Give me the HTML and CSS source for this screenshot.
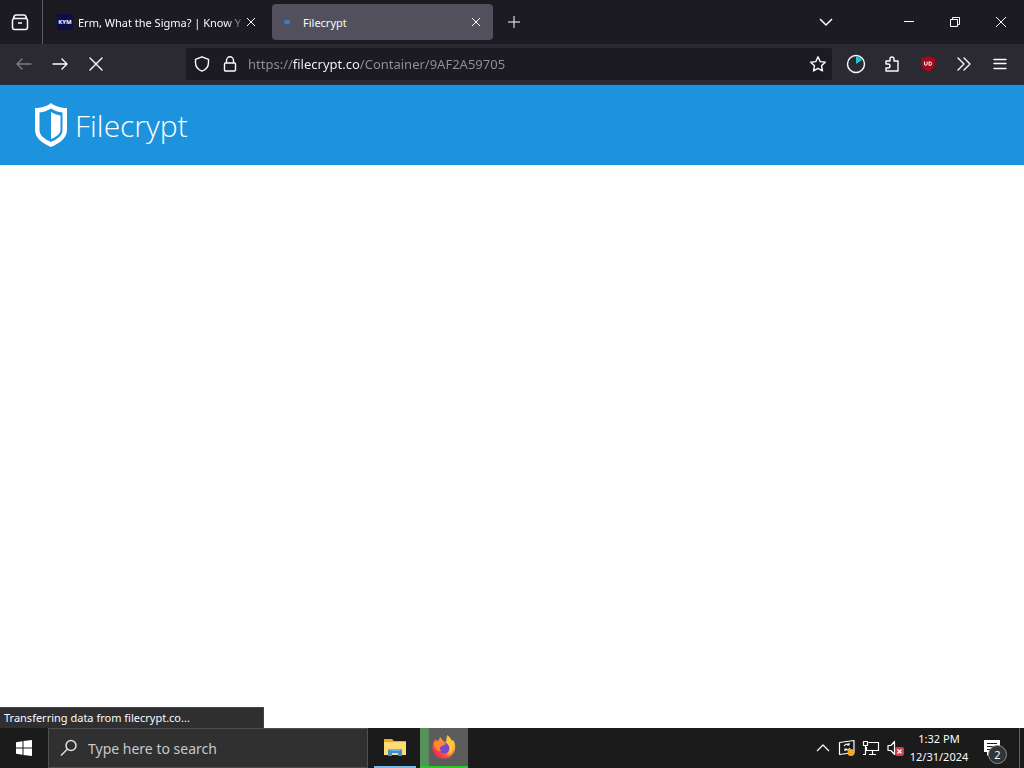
FILE: index.html
```
<!DOCTYPE html>
<html lang="en">
<head>
  <meta charset="UTF-8">
  <meta name="viewport" content="width=device-width, initial-scale=1.0">
  <title>Filecrypt</title>
  <link rel="stylesheet" href="styles.css">
</head>
<body>

<!-- Tab strip -->
<div class="tab-bar">
  <button class="view-button" aria-label="Firefox View">
    <svg width="20" height="20" viewBox="0 0 20 20"><path d="M6 3h8M4.500 6.500h11a2 2 0 0 1 2 2v7a2 2 0 0 1-2 2h-11a2 2 0 0 1-2-2v-7a2 2 0 0 1 2-2zM3.500 6.500q.5-3.500 2.500-3.500M16.500 6.500q-.5-3.500-2.500-3.500M8 11h4"/></svg>
  </button>
  <div class="tabs">
    <div class="tab">
      <span class="kym-icon" aria-hidden="true">KYM</span>
      <button class="tab-title tab-title-fade">Erm, What the Sigma? | Know Y</button>
      <button class="tab-close" aria-label="Close tab"><svg width="10" height="10" viewBox="0 0 10 10"><path d="M1 1l8 8M9 1L1 9"/></svg></button>
    </div>
    <div class="tab tab-active">
      <span class="loading-icon"></span>
      <button class="tab-title">Filecrypt</button>
      <button class="tab-close" aria-label="Close tab"><svg width="10" height="10" viewBox="0 0 10 10"><path d="M1 1l8 8M9 1L1 9"/></svg></button>
    </div>
  </div>
  <button class="new-tab" aria-label="New tab"><svg width="12" height="12" viewBox="0 0 12 12"><path d="M6 0v12M0 6h12"/></svg></button>
  <button class="list-tabs" aria-label="List all tabs"><svg width="14" height="14" viewBox="0 0 14 14"><path d="M1 4l6 6 6-6"/></svg></button>
  <div class="window-controls">
    <button aria-label="Minimize"><svg width="10" height="10" viewBox="0 0 10 10"><path d="M0 4.500h10"/></svg></button>
    <button aria-label="Restore"><svg width="10" height="10" viewBox="0 0 10 10"><path d="M.5 2.500h7v7h-7zM2.500 2.500v-2h7v7h-2"/></svg></button>
    <button aria-label="Close"><svg width="10" height="10" viewBox="0 0 10 10"><path d="M0 0l10 10M10 0L0 10"/></svg></button>
  </div>
</div>

<!-- Navigation -->
<div class="nav-bar">
  <div class="nav-buttons">
    <button class="nav-off" aria-label="Back"><svg width="16" height="16" viewBox="0 0 16 16"><path d="M15 8H1M6 3L1 8l5 5"/></svg></button>
    <button aria-label="Forward"><svg width="16" height="16" viewBox="0 0 16 16"><path d="M1 8h14M10 3l5 5-5 5"/></svg></button>
    <button aria-label="Stop"><svg width="16" height="16" viewBox="0 0 16 16"><path d="M2 2l12 12M14 2L2 14"/></svg></button>
  </div>
  <div class="url-bar">
    <button aria-label="Tracking protection"><svg width="16" height="16" viewBox="0 0 16 16"><path d="M8 .8l6.500 2.500v3.200c0 4-2.500 7.200-6.500 8.700C4 13.700 1.500 10.500 1.500 6.500V3.300z"/></svg></button>
    <button aria-label="Site information"><svg width="16" height="16" viewBox="0 0 16 16"><path d="M4.500 7V4.500a3.500 3.700 0 0 1 7 0V7M3.500 7h9a1 1 0 0 1 1 1v6a1 1 0 0 1-1 1h-9a1 1 0 0 1-1-1V8a1 1 0 0 1 1-1z"/></svg></button>
    <input class="url-input" type="text" aria-label="Address" value="https://filecrypt.co/Container/9AF2A59705">
    <button aria-label="Bookmark"><svg width="16" height="16" viewBox="0 0 16 16"><path d="M8 .8l2.200 4.800 5.100.6-3.800 3.500 1 5.200L8 12.300l-4.500 2.600 1-5.200L.7 6.200l5.100-.6z"/></svg></button>
  </div>
  <div class="extensions">
    <button aria-label="Timer"><svg width="20" height="20" viewBox="0 0 20 20"><circle cx="10" cy="10" r="8.500"/><path class="pie" d="M10 10V2.500a7.500 7.500 0 0 1 6 3.500z"/></svg></button>
    <button aria-label="Extensions"><svg width="16" height="16" viewBox="0 0 16 16"><path d="M2 15h12V5h-4V3a1.900 1.900 0 0 0-4 0v2H2v3h2a1.900 1.900 0 0 1 0 4H2z"/></svg></button>
    <button aria-label="uBlock Origin"><svg width="16" height="16" viewBox="0 0 16 16"><path class="badge" d="M8 0q3 2 7 2v5q0 6-7 9-7-3-7-9V2q4 0 7-2z"/><path class="mark" d="M4.500 6v2a1.300 1.300 0 0 0 2.600 0V6M9 6v3.300h1a1.600 1.600 0 0 0 0-3.300z"/></svg></button>
    <button aria-label="More tools"><svg width="16" height="16" viewBox="0 0 16 16"><path d="M2 2l6 6-6 6M8 2l6 6-6 6"/></svg></button>
    <button aria-label="Menu"><svg width="16" height="16" viewBox="0 0 16 16"><path d="M2 3.500h12M2 7.500h12M2 12.500h12"/></svg></button>
  </div>
</div>

<!-- Page -->
<header class="site-header">
  <a class="logo" href="#">
    <svg width="34" height="44" viewBox="0 0 34 44"><path fill="#fff" fill-rule="evenodd" d="M17 0c4 3.500 10 5 16 5v22c0 8-7 13-16 17C8 40 1 35 1 27V5c6 0 12-1.500 16-5zM17 5.500C13 8 10 9 5.500 9.500V27c0 5.500 5 9 11.500 12 6.500-3 11.500-6.500 11.500-12V9.500C24 9 21 8 17 5.500z"/><path fill="#fff" d="M17 9c3 2 6 3 9.500 3.500V27c0 4-4.500 7-9.500 9z"/></svg>
    <span>Filecrypt</span>
  </a>
</header>
<main class="page">
  <div class="status" role="status">Transferring data from filecrypt.co...</div>
</main>

<!-- Taskbar -->
<footer class="taskbar">
  <button class="start" aria-label="Start"><svg width="16" height="16" viewBox="0 0 16 16"><path fill="#fff" d="M0 2.200L6.500 1.300V7.500H0zM7.500 1.100L16 0v7.500H7.500zM0 8.500h6.500v6.200L0 13.800zM7.500 8.500H16V16l-8.500-1.100z"/></svg></button>
  <label class="search">
    <svg width="18" height="18" viewBox="0 0 18 18"><circle cx="11" cy="6.500" r="5"/><path d="M7.500 10L1 16.500"/></svg>
    <input type="text" placeholder="Type here to search" aria-label="Type here to search">
  </label>
  <div class="apps">
    <button class="app" aria-label="File Explorer">
      <svg width="22" height="20" viewBox="0 0 22 20"><path fill="#e9a92b" d="M0 2h8l2 2h12v14H0z"/><path fill="#ffdc72" d="M0 5h22v13H0z"/><path fill="#3f8bce" d="M4 19v-5q0-2 2-2h10q2 0 2 2v5h-4v-3H8v3z"/><path fill="#69b1e8" d="M6 12h10v2H6z"/></svg>
    </button>
    <button class="app app-active" aria-label="Firefox">
      <svg width="24" height="24" viewBox="0 0 24 24">
        <defs><linearGradient id="flame" x1="1" y1="0" x2="0" y2="1"><stop offset="0" stop-color="#fff04a"/><stop offset=".4" stop-color="#ff9a32"/><stop offset=".7" stop-color="#ff443d"/><stop offset="1" stop-color="#e31578"/></linearGradient></defs>
        <path fill="url(#flame)" d="M15 0c3 2 4 4 5 6l1-1c2 3 3 7 1.500 11A11.500 11.500 0 0 1 1 16C-.5 11 1 7 3.500 3.500L4 6l3-1L8 2l3 4 3 1c1-2 1.500-4 1-7z"/>
        <circle cx="12" cy="13" r="5.500" fill="#7549d5"/>
        <path fill="#ff8a32" d="M2 8q4-4 9-1l3 2-4 2c-3 1-3 4 0 5-5 1-8-3-8-8z"/>
        <path fill="#ffc53d" d="M15 1q8 7 5 15-1 3-5 4 4-5 2-9-4-4-2-10z"/>
      </svg>
    </button>
  </div>
  <div class="tray">
    <button aria-label="Show hidden icons"><svg width="16" height="16" viewBox="0 0 16 16"><path d="M1 11l6-6 6 6"/></svg></button>
    <button aria-label="Update"><svg width="18" height="18" viewBox="0 0 18 18"><path d="M1.500 3.500L16 1.500v12L1.500 15.500zM6 7q2-3 5-1V4M11 6H9M12 9q-2 3-5 1v2M7 10h2"/><circle class="orange" cx="13" cy="13.500" r="3.500"/></svg></button>
    <button aria-label="Network"><svg width="18" height="18" viewBox="0 0 18 18"><path d="M6.500 3.500h10v8h-12V8M10.500 12v3.500M7 15.500h7M1.500 2.500h4v4h-4zM3.500 6.500v9H1"/></svg></button>
    <button aria-label="Volume"><svg width="18" height="18" viewBox="0 0 18 18"><path d="M2 6.500h3l3.500-4v13L5 11.500H2z"/><rect class="red" x="9" y="8" width="9" height="9" rx="2"/><path d="M11.500 10.500l4 4M15.500 10.500l-4 4"/></svg></button>
  </div>
  <button class="clock"><span>1:32 PM</span><span>12/31/2024</span></button>
  <button class="notices" aria-label="Notifications">
    <svg width="18" height="18" viewBox="0 0 18 18"><path fill="#fff" fill-rule="evenodd" d="M1 1h16v12H8l-4 4v-4H1zM4 4v1h10V4zM4 7v1h10V7zM4 10v1h7v-1z"/></svg>
    <span class="count">2</span>
  </button>
  <button class="show-desktop" aria-label="Show desktop"></button>
</footer>

</body>
</html>
```

FILE: styles.css
```
* {
  box-sizing: border-box;
}

body {
  margin: 0;
  min-height: 100vh;
  display: flex;
  flex-direction: column;
  background: #fff;
  color: #fbfbfe;
  font-family: "Noto Sans", "Open Sans", sans-serif;
  font-size: 11px;
}

button {
  display: flex;
  align-items: center;
  justify-content: center;
  padding: 0;
  border: 0;
  background: none;
  color: inherit;
  font: inherit;
}

input {
  min-width: 0;
  padding: 0;
  border: 0;
  outline: 0;
  background: none;
  color: inherit;
  font: inherit;
}

svg {
  display: block;
  flex: none;
  fill: none;
  stroke-linejoin: round;
}

/* Tab strip */
.tab-bar {
  display: flex;
  align-items: center;
  height: 44px;
  background: #1c1b22;
}

.tab-bar svg {
  stroke: #fbfbfe;
}

.view-button {
  width: 43px;
  height: 44px;
  padding-right: 3px;
  border-right: 1px solid #5b5a64;
}

.view-button svg {
  stroke-width: 1.5;
}

.tabs {
  flex: 0 1 450px;
  display: flex;
  gap: 4px;
  padding-left: 4px;
  min-width: 0;
}

.tab {
  flex: 1;
  display: flex;
  align-items: center;
  min-width: 0;
  height: 36px;
  padding: 0 12px 0 10px;
  border-radius: 4px;
}

.tab-active {
  background: #52505d;
}

.tab-title {
  flex: 1;
  justify-content: flex-start;
  min-width: 0;
  height: 20px;
  white-space: nowrap;
  overflow: hidden;
}

.tab-title-fade {
  -webkit-mask-image: linear-gradient(to left, transparent, #000 20px);
  mask-image: linear-gradient(to left, transparent, #000 20px);
}

.tab-close {
  width: 10px;
  height: 20px;
}

.kym-icon {
  flex: none;
  width: 16px;
  margin-right: 5px;
  background: #110c43;
  font-size: 6px;
  font-weight: bold;
  line-height: 16px;
  text-align: center;
}

.loading-icon {
  flex: none;
  width: 6px;
  height: 4px;
  margin: 0 13px 0 2px;
  border-radius: 2px;
  background: #3b7fd0;
}

.new-tab {
  width: 42px;
  height: 36px;
}

.list-tabs {
  width: 36px;
  height: 36px;
  margin-left: auto;
  margin-right: 42px;
}

.list-tabs svg {
  stroke-width: 1.5;
}

.window-controls {
  display: flex;
}

.window-controls button {
  width: 46px;
  height: 36px;
}

/* Navigation */
.nav-bar {
  display: flex;
  align-items: center;
  height: 41px;
  background: #2b2a33;
  border-bottom: 1px solid #16334c;
}

.nav-bar svg {
  stroke: #fbfbfe;
  stroke-width: 1.4;
  stroke-linecap: round;
}

.nav-buttons,
.extensions {
  display: flex;
}

.nav-buttons {
  padding-left: 6px;
}

.nav-buttons button,
.extensions button {
  width: 36px;
  height: 32px;
}

.nav-buttons .nav-off {
  opacity: 0.4;
}

.url-bar {
  flex: 1;
  display: flex;
  align-items: center;
  height: 32px;
  min-width: 0;
  margin-left: 72px;
  padding-left: 2px;
  border-radius: 2px;
  background: #1c1b22;
}

.url-bar button {
  width: 28px;
  height: 32px;
}

/* the domain part is brighter than the rest of the address */
.url-input {
  flex: 1;
  margin: 0 4px;
  font-size: 13px;
  background: linear-gradient(to right, #92919b 45px, #fbfbfe 45px, #fbfbfe 111px, #92919b 111px);
  -webkit-background-clip: text;
  background-clip: text;
  color: transparent;
}

.extensions {
  padding: 0 6px;
}

.nav-bar .pie {
  fill: #20c5dc;
  stroke: none;
}

.nav-bar .badge {
  fill: #a00a1a;
  stroke: none;
}

.nav-bar .mark {
  stroke-width: 1;
}

/* Page */
.site-header {
  display: flex;
  align-items: center;
  height: 80px;
  padding: 0 34px;
  background: #1c93dc;
}

.logo {
  display: flex;
  align-items: center;
  gap: 7px;
  color: #fff;
  font-family: "Open Sans", "Noto Sans", sans-serif;
  font-size: 30px;
  font-weight: 300;
  text-decoration: none;
}

.page {
  flex: 1;
  position: relative;
}

.status {
  position: absolute;
  left: 0;
  bottom: 0;
  width: 264px;
  padding: 0 4px;
  border: 1px solid #42414d;
  border-left: 0;
  border-bottom: 0;
  background: #2f2f31;
  line-height: 20px;
}

/* Taskbar */
.taskbar {
  display: flex;
  height: 40px;
  background: #1b1b1b;
}

.start {
  width: 48px;
}

.search {
  display: flex;
  align-items: center;
  gap: 10px;
  flex: 0 1 320px;
  min-width: 0;
  padding: 0 11px;
  border: 1px solid #505050;
  background: #303030;
}

.search svg {
  stroke: #e0e0e0;
  stroke-width: 1.5;
}

.search input {
  flex: 1;
  font-size: 14px;
}

.search input::placeholder {
  color: #c8c8c8;
  opacity: 1;
}

.apps {
  display: flex;
  gap: 4px;
  padding-left: 6px;
}

.app {
  width: 42px;
  border-bottom: 2px solid #76b9ed;
}

.app-active {
  width: 48px;
  border-bottom-color: #28c928;
  background: linear-gradient(to right, #57925a 8px, #5c5c5c 10px);
}

.tray {
  display: flex;
  align-items: center;
  gap: 6px;
  margin-left: auto;
}

.tray svg {
  stroke: #fff;
  stroke-width: 1.2;
}

.tray .orange {
  fill: #f5a623;
  stroke: none;
}

.tray .red {
  fill: #d83b4b;
  stroke: none;
}

.clock {
  flex-direction: column;
  width: 70px;
  line-height: 18px;
}

.notices {
  position: relative;
  width: 45px;
  padding-right: 9px;
}

.count {
  position: absolute;
  right: 12px;
  bottom: 4px;
  width: 19px;
  border: 1px solid #8a8a8a;
  border-radius: 50%;
  background: #333;
  line-height: 17px;
  text-align: center;
}

.show-desktop {
  width: 5px;
  border-left: 1px solid #626262;
}
```
